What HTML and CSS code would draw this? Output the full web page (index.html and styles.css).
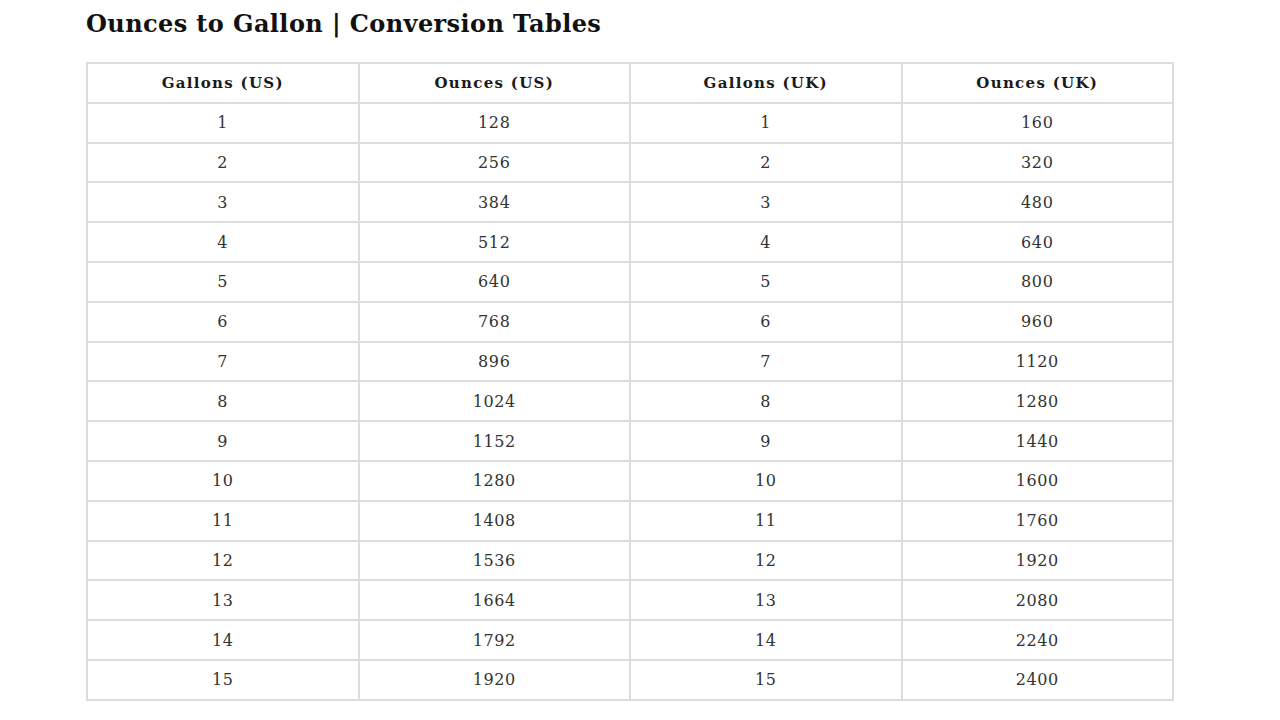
FILE: index.html
```html
<!DOCTYPE html>
<html>
<head>
<meta charset="utf-8">
<link rel="stylesheet" href="styles.css">
</head>
<body>
<div class="page">
  <h1 class="title">Ounces to Gallon | Conversion Tables</h1>
  <table class="conv">
    <thead>
      <tr><th>Gallons (US)</th><th>Ounces (US)</th><th>Gallons (UK)</th><th>Ounces (UK)</th></tr>
    </thead>
    <tbody>
      <tr><td>1</td><td>128</td><td>1</td><td>160</td></tr>
      <tr><td>2</td><td>256</td><td>2</td><td>320</td></tr>
      <tr><td>3</td><td>384</td><td>3</td><td>480</td></tr>
      <tr><td>4</td><td>512</td><td>4</td><td>640</td></tr>
      <tr><td>5</td><td>640</td><td>5</td><td>800</td></tr>
      <tr><td>6</td><td>768</td><td>6</td><td>960</td></tr>
      <tr><td>7</td><td>896</td><td>7</td><td>1120</td></tr>
      <tr><td>8</td><td>1024</td><td>8</td><td>1280</td></tr>
      <tr><td>9</td><td>1152</td><td>9</td><td>1440</td></tr>
      <tr><td>10</td><td>1280</td><td>10</td><td>1600</td></tr>
      <tr><td>11</td><td>1408</td><td>11</td><td>1760</td></tr>
      <tr><td>12</td><td>1536</td><td>12</td><td>1920</td></tr>
      <tr><td>13</td><td>1664</td><td>13</td><td>2080</td></tr>
      <tr><td>14</td><td>1792</td><td>14</td><td>2240</td></tr>
      <tr><td>15</td><td>1920</td><td>15</td><td>2400</td></tr>
    </tbody>
  </table>
</div>
</body>
</html>
```
FILE: styles.css
```css
html, body {
  margin: 0;
  padding: 0;
  background: #ffffff;
}
.page {
  padding: 10px 0 0 86px;
  width: 1088px;
}
.title {
  margin: 0 0 24px 0;
  font-family: "DejaVu Serif", serif;
  font-weight: bold;
  font-size: 24px;
  letter-spacing: 0.4px;
  line-height: 28px;
  color: #111111;
}
.conv {
  width: 1088px;
  border-collapse: collapse;
  table-layout: fixed;
  font-family: "DejaVu Serif", serif;
}
.conv th, .conv td {
  border: 2px solid #dddddd;
  height: 37.8px;
  padding: 0;
  text-align: center;
  vertical-align: middle;
}
.conv th {
  font-weight: bold;
  font-size: 15px;
  letter-spacing: 1.3px;
  color: #1a1a1a;
}
.conv td {
  font-size: 16px;
  letter-spacing: 0.6px;
  color: #333333;
}
```
